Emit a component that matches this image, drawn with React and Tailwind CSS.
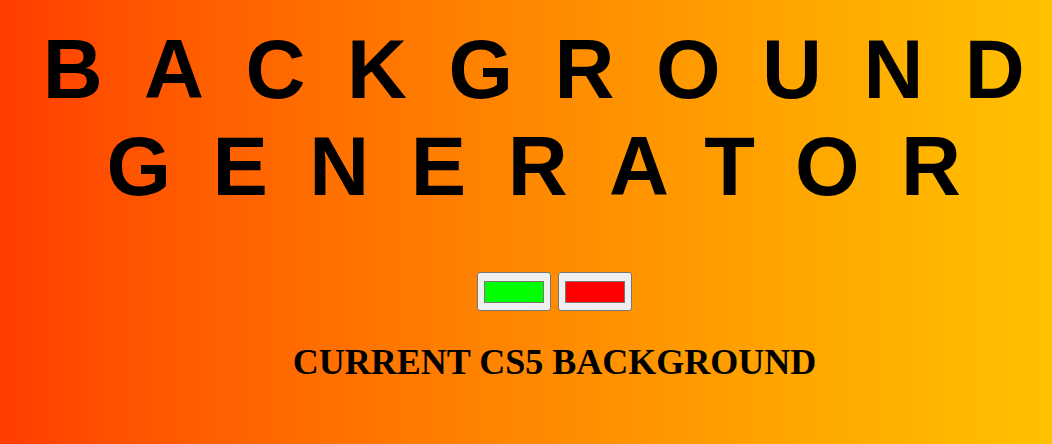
export default function App() {
  return (
    <div className="h-[444px] w-full overflow-hidden bg-linear-to-r from-[#ff3c00] to-[#ffc100]">
      <div className="w-[1109px] text-center">
        <h1 className="pt-[21px] font-['Liberation_Sans',Arial,sans-serif] text-[83px] font-bold leading-[97px] tracking-[0.5em] text-black">
          BACKGROUND GENERATOR
        </h1>
        <div className="mt-[57px] flex justify-center gap-[7px]">
          <div className="flex h-[39px] w-[74px] items-center justify-center rounded-[3px] border border-[#767676] bg-[#efefef]">
            <div className="h-[22px] w-[60px] border border-[#777] bg-[#00ff00]" />
          </div>
          <div className="flex h-[39px] w-[74px] items-center justify-center rounded-[3px] border border-[#767676] bg-[#efefef]">
            <div className="h-[22px] w-[60px] border border-[#777] bg-[#ff0000]" />
          </div>
        </div>
        <h3 className="mt-[31px] font-['Liberation_Serif','Times_New_Roman',serif] text-[36px] font-bold leading-[1.15] text-black">
          CURRENT CS5 BACKGROUND
        </h3>
      </div>
    </div>
  )
}
